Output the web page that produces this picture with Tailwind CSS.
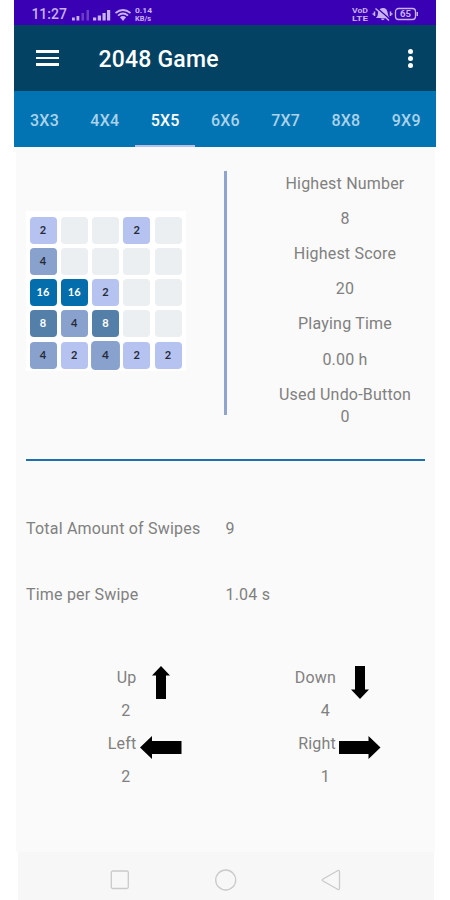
<!DOCTYPE html>
<html lang="en">
<head>
<meta charset="utf-8">
<meta name="viewport" content="width=device-width, initial-scale=1">
<title>2048 Game</title>
<script src="https://cdn.jsdelivr.net/npm/@tailwindcss/browser@4"></script>
</head>
<body class="bg-white overflow-hidden">
<div class="w-[450px] h-[900px] flex flex-col overflow-hidden font-[Roboto,sans-serif] text-[#808080]">
  <header class="ml-[14.4px] w-[422px] shrink-0">
    <div class="h-[25px] bg-[#3a00b3] flex items-center pl-[17px] pr-[17px] pt-[3px] text-[#c8b2f0]">
      <span class="text-[14px] font-medium leading-none w-[36px] whitespace-nowrap">11:27</span>
      <svg class="ml-[4px]" width="84" height="16" viewBox="0 0 84 16" fill="currentColor">
        <path d="M1 11.500h2.800v3H1zM5.500 10h2.800v4.500H5.500z"/><path opacity=".35" d="M10.500 7h2.500v7.500h-2.500zM15.500 4H18v10.500h-2.500z"/>
        <path d="M22 11.500h3.200v3H22zM26.800 9.500H30v5h-3.200zM31.500 7h3.200v7.500h-3.200zM36 4h3.200v10.500H36z"/>
        <g fill="none" stroke="currentColor" stroke-width="1.700"><path d="M44.500 7q7.500-6 15 0M47 9.600q5-4.200 10 0M49.500 12q2.500-2 5 0"/></g><path d="M50 12.500q2-1.300 4 0l-2 2.500z"/>
        <text x="64" y="7.300" font-size="8" font-weight="700" textLength="17" lengthAdjust="spacingAndGlyphs">0.14</text>
        <text x="64" y="14.800" font-size="8" font-weight="700" textLength="16" lengthAdjust="spacingAndGlyphs">KB/s</text>
      </svg>
      <svg class="ml-auto" width="67" height="16" viewBox="0 0 67 16" fill="currentColor">
        <text x="0" y="7.300" font-size="8" font-weight="700" textLength="16" lengthAdjust="spacingAndGlyphs">VoD</text>
        <text x="0" y="14.800" font-size="8" font-weight="700" textLength="16" lengthAdjust="spacingAndGlyphs">LTE</text>
        <path d="M24 12q2-1.500 2-5 .5-4.500 4.500-5t5 4q.500 4 2 6zM28.500 12.500h4.500q-2.250 3.500-4.500 0z"/>
        <path d="M24.500 1.500 37.500 13" stroke="#3a00b3" stroke-width="1.500"/><path d="M23.500 2.500 37 14.500M22.500 5.500v4.500M20.500 8h2M38.500 5.500V10M38.500 8h2" stroke="currentColor" stroke-width="1.500"/>
        <rect x="43.500" y="2.500" width="20" height="11" rx="3" fill="none" stroke="currentColor" stroke-width="1.300"/>
        <path d="M64.500 6h1.500v4h-1.500z"/>
        <text x="48" y="11.300" font-size="9" font-weight="700" textLength="11" lengthAdjust="spacingAndGlyphs">65</text>
      </svg>
    </div>
    <div class="h-[66px] bg-[#044264] flex items-center pl-[21.400px] pr-[23px] text-white">
      <div class="w-[23px] flex flex-col gap-[4px]">
        <span class="h-[2.500px] bg-white"></span><span class="h-[2.500px] bg-white"></span><span class="h-[2.500px] bg-white"></span>
      </div>
      <h1 class="ml-[39.700px] text-[23px] tracking-[0.2px] font-medium leading-none whitespace-nowrap pt-[3px]">2048 Game</h1>
      <div class="ml-auto flex flex-col gap-[2px]">
        <span class="size-[5px] rounded-full bg-white"></span><span class="size-[5px] rounded-full bg-white"></span><span class="size-[5px] rounded-full bg-white"></span>
      </div>
    </div>
    <nav class="h-[56px] bg-[#0374b3] grid grid-cols-7 text-center text-[16px] font-medium text-[#aad3ea] leading-[60px] tracking-[0.2px]">
      <span>3X3</span><span>4X4</span><span class="text-white border-b-2 border-[#b4c0e8] h-[56px]">5X5</span><span>6X6</span><span>7X7</span><span>8X8</span><span>9X9</span>
    </nav>
  </header>

  <main class="ml-[15.500px] w-[419px] h-[705px] shrink-0 bg-[#fafafa] pl-[10.500px]">
    <section class="flex h-[312px]">
      <div class="mt-[63.500px] w-[160px] h-[160px] bg-white grid grid-cols-[repeat(5,27px)] grid-rows-[repeat(5,27px)] gap-[4.250px] pl-[3.500px] pt-[6px] text-[11px] font-bold text-[#262b38] text-center leading-[26px] font-[Lato,sans-serif]">
        <span class="rounded-[4px] bg-[#b6c3f0]">2</span><span class="rounded-[4px] bg-[#ebeff2]"></span><span class="rounded-[4px] bg-[#ebeff2]"></span><span class="rounded-[4px] bg-[#b6c3f0]">2</span><span class="rounded-[4px] bg-[#ebeff2]"></span>
        <span class="rounded-[4px] bg-[#88a1cd]">4</span><span class="rounded-[4px] bg-[#ebeff2]"></span><span class="rounded-[4px] bg-[#ebeff2]"></span><span class="rounded-[4px] bg-[#ebeff2]"></span><span class="rounded-[4px] bg-[#ebeff2]"></span>
        <span class="rounded-[4px] bg-[#046ead] text-white">16</span><span class="rounded-[4px] bg-[#046ead] text-white">16</span><span class="rounded-[4px] bg-[#b6c3f0]">2</span><span class="rounded-[4px] bg-[#ebeff2]"></span><span class="rounded-[4px] bg-[#ebeff2]"></span>
        <span class="rounded-[4px] bg-[#547fa9] text-white">8</span><span class="rounded-[4px] bg-[#88a1cd]">4</span><span class="rounded-[4px] bg-[#547fa9] text-white">8</span><span class="rounded-[4px] bg-[#ebeff2]"></span><span class="rounded-[4px] bg-[#ebeff2]"></span>
        <span class="rounded-[4px] bg-[#88a1cd]">4</span><span class="rounded-[4px] bg-[#b6c3f0]">2</span><span class="rounded-[4px] bg-[#88a1cd] scale-[1.070]">4</span><span class="rounded-[4px] bg-[#b6c3f0]">2</span><span class="rounded-[4px] bg-[#b6c3f0]">2</span>
      </div>
      <div class="ml-[38px] mt-[24px] w-[3px] h-[244px] bg-[#8fa5d0]"></div>
      <dl class="ml-[38px] mt-[26px] w-[160px] text-center text-[16px] tracking-[0.2px] leading-[22px] whitespace-nowrap">
        <dt>Highest Number</dt><dd class="mt-[13px] mb-[13px]">8</dd>
        <dt>Highest Score</dt><dd class="mt-[13px] mb-[13px]">20</dd>
        <dt>Playing Time</dt><dd class="mt-[14px] mb-[13px]">0.00 h</dd>
        <dt>Used Undo-Button</dt><dd>0</dd>
      </dl>
    </section>
    <div class="w-[399px] h-[2px] bg-[#1d6fae]"></div>
    <dl class="mt-[57px] grid grid-cols-[199.500px_1fr] gap-y-[44px] text-[16px] leading-[22px] tracking-[0.2px] whitespace-nowrap">
      <dt>Total Amount of Swipes</dt><dd>9</dd>
      <dt>Time per Swipe</dt><dd>1.04 s</dd>
    </dl>
    <section class="mt-[60px] grid grid-cols-[199.500px_199.500px] text-[16px] leading-[22px] tracking-[0.2px]">
      <div class="flex h-[66px]">
        <div class="w-[110.500px] text-right pt-[1px]"><p>Up</p><p class="mt-[11px] pr-[6px]">2</p></div>
        <svg class="ml-[14px]" width="20" height="34" viewBox="0 0 20 34"><path d="M10 0l9 9.500h-4V33H5V9.500H1z"/></svg>
      </div>
      <div class="flex h-[66px]">
        <div class="w-[110.500px] text-right pt-[1px]"><p>Down</p><p class="mt-[11px] pr-[6px]">4</p></div>
        <svg class="ml-[14px]" width="20" height="34" viewBox="0 0 20 34"><path d="M5 -.5h10v24h4l-9 9.500L1 23.500h4z"/></svg>
      </div>
      <div class="flex h-[66px]">
        <div class="w-[110.500px] text-right pt-[1px]"><p>Left</p><p class="mt-[11px] pr-[6px]">2</p></div>
        <svg class="ml-[3px] mt-[4px]" width="42" height="24" viewBox="0 0 42 24"><path d="M0 11.500L12 0v5h29.500v13H12v5z"/></svg>
      </div>
      <div class="flex h-[66px]">
        <div class="w-[110.500px] text-right pt-[1px]"><p>Right</p><p class="mt-[11px] pr-[6px]">1</p></div>
        <svg class="ml-[3px] mt-[4px]" width="42" height="24" viewBox="0 0 42 24"><path d="M41.500 11.500L29.500 0v5H0v13h29.500v5z"/></svg>
      </div>
    </section>
  </main>
  <footer class="ml-[17.500px] w-[416px] grow bg-[#f7f7f7] flex pl-[91.500px] pt-[16px] gap-[84px]">
    <svg width="22" height="24" viewBox="0 0 22 24" fill="none" stroke="#cacaca" stroke-width="1.300"><rect x="2.300" y="3" width="17" height="17.500" rx="1.500"/></svg>
    <svg width="22" height="24" viewBox="0 0 22 24" fill="none" stroke="#cacaca" stroke-width="1.300"><circle cx="10.700" cy="12" r="10"/></svg>
    <svg width="22" height="24" viewBox="0 0 22 24" fill="none" stroke="#cacaca" stroke-width="1.300" stroke-linejoin="round"><path d="M17 2.500Q18.500 2 18.500 4v16q0 2-1.500 1.500L2 13q-1.500-1 0-2z"/></svg>
  </footer>
</div>
</body>
</html>
